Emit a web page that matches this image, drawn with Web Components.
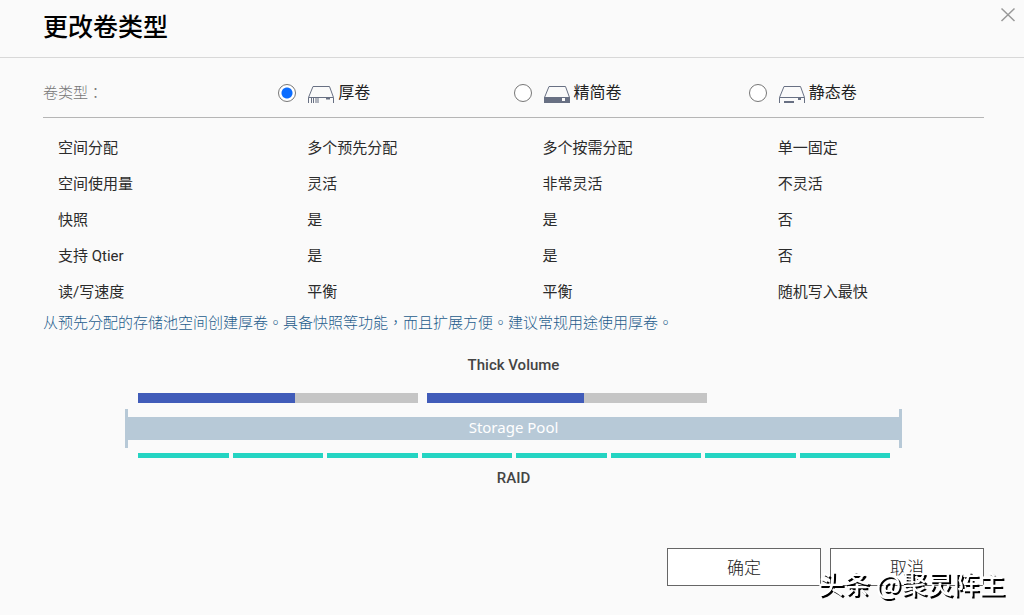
<!DOCTYPE html>
<html lang="zh-CN">
<head>
<meta charset="utf-8">
<meta name="viewport" content="width=device-width, initial-scale=1">
<title>更改卷类型</title>
<style>
  html, body { margin: 0; background: #fafafa; }
  body { font-family: Roboto, "Noto Sans CJK TC", sans-serif; color: #2b2b2b; }
</style>
</head>
<body>
<volume-dialog>
  <span slot="title">更改卷类型</span>
  <volume-type-picker></volume-type-picker>
  <volume-compare></volume-compare>
  <volume-note lang="zh-TW">从预先分配的存储池空间创建厚卷。具备快照等功能，而且扩展方便。建议常规用途使用厚卷。</volume-note>
  <storage-diagram>
    <span slot="volume">Thick Volume</span>
    <span slot="pool">Storage Pool</span>
    <span slot="raid">RAID</span>
  </storage-diagram>
  <dialog-button slot="actions">确定</dialog-button>
  <dialog-button slot="actions">取消</dialog-button>
</volume-dialog>
<author-mark>头条 @聚灵阵主</author-mark>

<script>
const define = (name, html) => {
  const template = document.createElement('template');
  template.innerHTML = html;
  customElements.define(name, class extends HTMLElement {
    constructor() {
      super();
      this.attachShadow({ mode: 'open' }).append(template.content.cloneNode(true));
    }
  });
};

define('volume-dialog', `
  <style>
    :host { display: flex; flex-direction: column; min-height: 100vh; box-sizing: border-box; padding-bottom: 29px; }
    header { display: flex; justify-content: space-between; align-items: flex-start; min-height: 58px; border-bottom: 1px solid #d8d8d8; padding: 0 8px 0 43px; box-sizing: border-box; }
    h1 { margin: 0; font-size: 25px; line-height: 56px; font-weight: 500; color: #000; }
    button { margin: 7px 0 0; padding: 0; border: 0; background: none; width: 16px; height: 16px; display: block; cursor: pointer; }
    svg { display: block; }
    main { flex: 1; padding: 0 40px 0 43px; }
    footer { display: flex; justify-content: flex-end; gap: 9px; padding: 0 40px; }
  </style>
  <header>
    <h1><slot name="title"></slot></h1>
    <button type="button" aria-label="关闭"><svg width="16" height="16" viewBox="0 0 16 16"><path d="M1.5 1.5l13 12.5M14.5 1.5l-13 12.5" fill="none" stroke="#999" stroke-width="1.5"/></svg></button>
  </header>
  <main><slot></slot></main>
  <footer><slot name="actions"></slot></footer>`);

const drives = {
  thick: '<path d="M.5 17V11.5L5 .5H21.5L25.5 11.5V17M.5 11.5H25.5M3.5 12V17M5.5 12V17M8 12V17M10 12V17"/><path d="M18 12h4v1.5h-4z" fill="#687083" stroke="none"/>',
  thin: '<path d="M.5 11.5L5 .5H21.5L25.5 11.5"/><path d="M0 11H26V17H0zM18 12v3h3v-3z" fill="#687083" fill-rule="evenodd" stroke="none"/>',
  static: '<path d="M.5 17V11.5L5 .5H21.5L25.5 11.5V17M.5 11.5H25.5"/><path d="M5 15H15V17H5zM19 12h3v2h-3z" fill="#687083" stroke="none"/>'
};
customElements.define('drive-icon', class extends HTMLElement {
  constructor() { super(); this.attachShadow({ mode: 'open' }); }
  connectedCallback() {
    this.shadowRoot.innerHTML = `<style>:host{display:block;width:26px;height:17px}svg{display:block}</style>
      <svg width="26" height="17" viewBox="0 0 26 17" fill="none" stroke="#687083">${drives[this.getAttribute('kind')]}</svg>`;
  }
});

define('volume-type-picker', `
  <style>
    :host { display: block; }
    .row { display: grid; grid-template-columns: repeat(4, 1fr); align-items: center; min-height: 60px; border-bottom: 1px solid #b5b5b5; padding-top: 10px; box-sizing: border-box; }
    #caption { font-size: 15px; font-weight: 300; line-height: 24px; color: #777; }
    label { display: flex; align-items: center; font-size: 16px; line-height: 24px; color: #222; }
    input { appearance: none; box-sizing: border-box; width: 18px; height: 18px; margin: 0 12px 0 0; border: 1px solid #777; border-radius: 50%; background: #fff; }
    input:checked { background: radial-gradient(circle, #0a6cff 5px, #fff 6px); }
    drive-icon { margin: 3px 4px 0 0; }
  </style>
  <div class="row" role="radiogroup" aria-labelledby="caption">
    <span id="caption" lang="zh-TW">卷类型：</span>
    <label><input type="radio" name="type" checked><drive-icon kind="thick"></drive-icon>厚卷</label>
    <label><input type="radio" name="type"><drive-icon kind="thin"></drive-icon>精简卷</label>
    <label><input type="radio" name="type"><drive-icon kind="static"></drive-icon>静态卷</label>
  </div>`);

const rows = [
  ['空间分配', '多个预先分配', '多个按需分配', '单一固定'],
  ['空间使用量', '灵活', '非常灵活', '不灵活'],
  ['快照', '是', '是', '否'],
  ['支持 Qtier', '是', '是', '否'],
  ['读/写速度', '平衡', '平衡', '随机写入最快']
];
define('volume-compare', `
  <style>
    :host { display: block; padding-top: 12px; }
    table { width: 100%; table-layout: fixed; border-collapse: collapse; font-size: 15px; line-height: 24px; }
    th, td { height: 36px; padding: 0 0 0 29px; box-sizing: border-box; text-align: left; font-weight: 400; white-space: nowrap; }
    th { padding-left: 15px; }
  </style>
  <table><tbody>${rows.map(([head, ...cells]) =>
    `<tr><th scope="row">${head}</th>${cells.map(c => `<td>${c}</td>`).join('')}</tr>`).join('')}</tbody></table>`);

define('volume-note', `
  <style>
    :host { display: block; font-size: 15px; line-height: 26px; font-weight: 300; color: #1d5c8c; }
  </style>
  <slot></slot>`);

define('storage-diagram', `
  <style>
    :host { display: block; padding: 17px 82px 0; text-align: center; font-size: 15px; line-height: 24px; font-weight: 500; color: #444; }
    .volumes, .disks { display: flex; padding: 0 12px 0 13px; }
    .volumes { gap: 9px; margin-top: 16px; }
    .volumes i { flex: 0 1 280px; height: 10px; background: linear-gradient(to right, #415cb9 56%, #c5c5c5 56%); }
    .pool { margin-top: 6px; padding: 8px 0; border: solid #b7c9d7; border-width: 0 3px; }
    .pool div { background: #b7c9d7; color: #fff; font-family: "Noto Sans", sans-serif; font-weight: 400; line-height: 20px; padding-bottom: 3px; }
    .disks { gap: 4px; margin: 5px 0 8px; }
    .disks i { flex: 1; height: 5px; background: #24d4c2; }
  </style>
  <div><slot name="volume"></slot></div>
  <div class="volumes"><i></i><i></i></div>
  <div class="pool"><div><slot name="pool"></slot></div></div>
  <div class="disks">${'<i></i>'.repeat(8)}</div>
  <div><slot name="raid"></slot></div>`);

define('dialog-button', `
  <style>
    :host { display: block; }
    button { width: 154px; height: 38px; padding: 0 0 2px; border: 1px solid #666; border-radius: 0; background: #fff; color: #222; font: inherit; font-size: 17px; font-weight: 300; }
  </style>
  <button type="button"><slot></slot></button>`);

define('author-mark', `
  <style>
    :host { position: fixed; right: 19px; bottom: 14px; font-family: "Noto Sans CJK SC", sans-serif; font-size: 26px; line-height: 36px; font-weight: 500; color: #fff; text-shadow: 2px 2px 0 #000; white-space: nowrap; pointer-events: none; }
  </style>
  <slot></slot>`);
</script>
</body>
</html>
